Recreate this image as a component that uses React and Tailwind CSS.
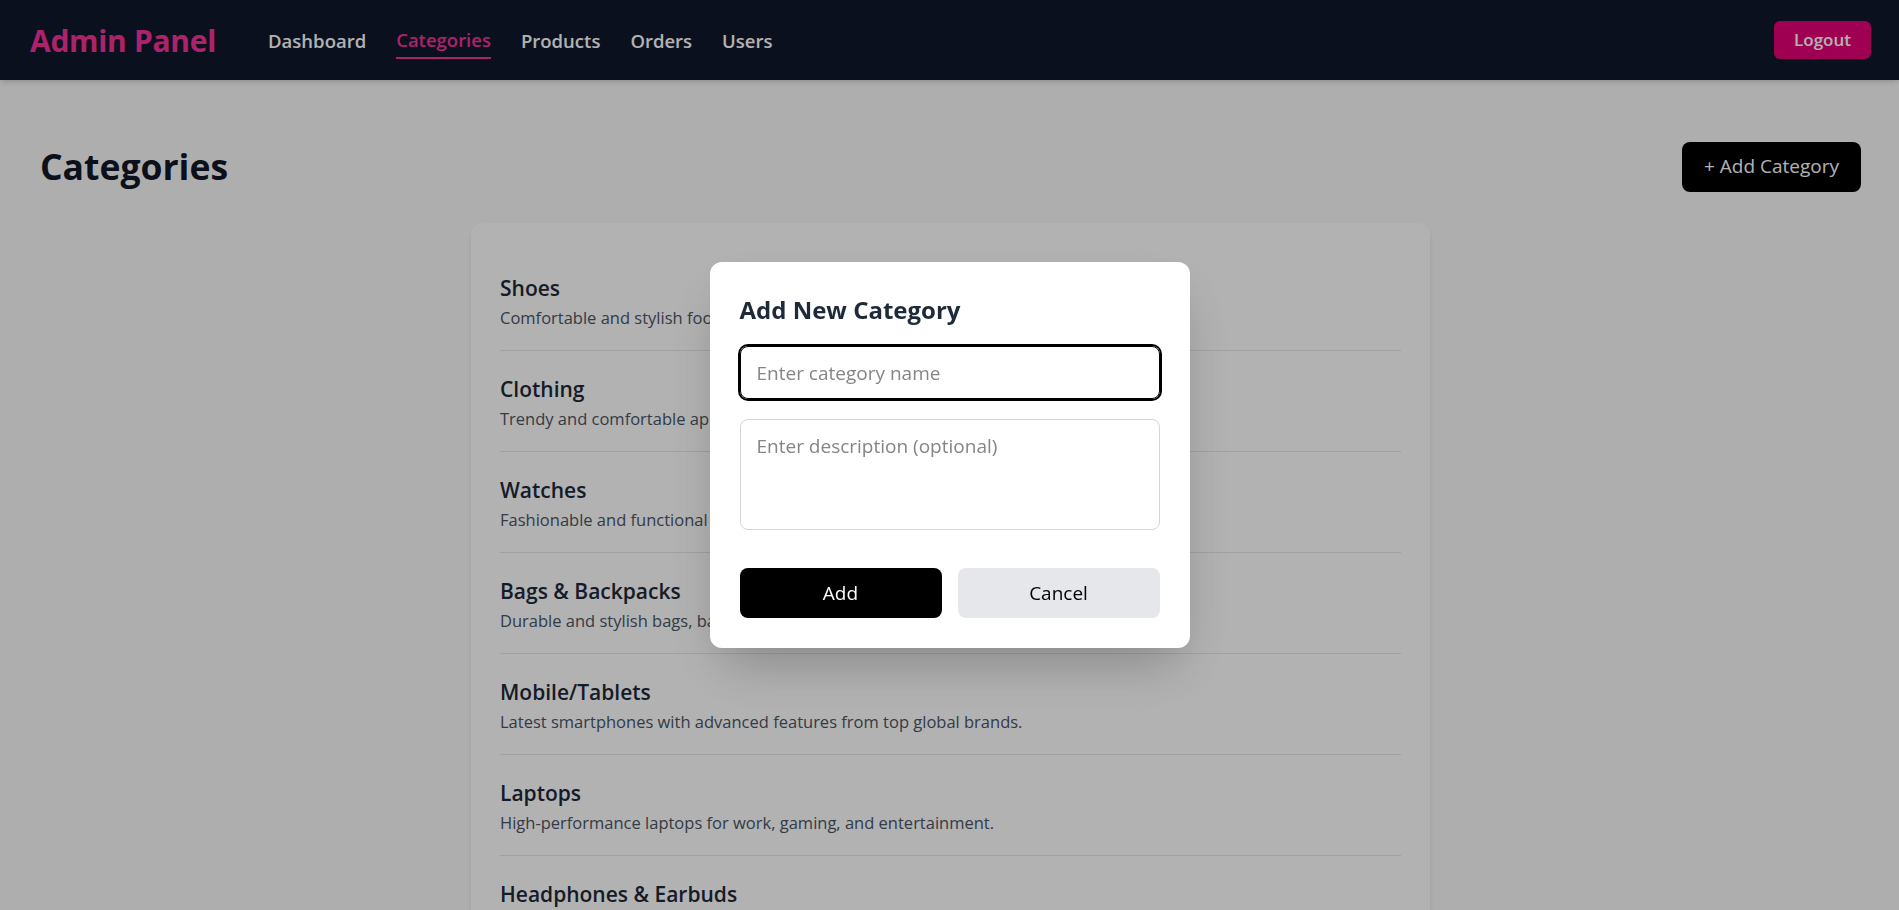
import React, { useState } from "react";

const categories = [
  { name: "Shoes", description: "Comfortable and stylish footwear for every occasion and season." },
  { name: "Clothing", description: "Trendy and comfortable apparel for men, women, and kids." },
  { name: "Watches", description: "Fashionable and functional watches from leading brands." },
  { name: "Bags & Backpacks", description: "Durable and stylish bags, backpacks, and travel essentials." },
  { name: "Mobile/Tablets", description: "Latest smartphones with advanced features from top global brands." },
  { name: "Laptops", description: "High-performance laptops for work, gaming, and entertainment." },
  { name: "Headphones & Earbuds", description: "Immersive sound with wired and wireless audio gear." },
  { name: "Home Appliances", description: "Smart and efficient appliances for modern living." },
];

const navLinks = ["Dashboard", "Categories", "Products", "Orders", "Users"];

const App = () => {
  const [name, setName] = useState("");
  const [description, setDescription] = useState("");

  return (
    <div className="h-screen overflow-hidden bg-gray-50 font-['Open_Sans',sans-serif]">
      {/* Top navigation */}
      <nav className="h-20 bg-slate-900 shadow-md flex items-center justify-between pl-[30px] pr-[28px]">
        <div className="flex items-center">
          <span className="text-[30px] font-bold text-pink-500 tracking-[-0.3px]">Admin Panel</span>
          <div className="flex items-center gap-[30px] ml-[52px]">
            {navLinks.map((link) => (
              <a
                key={link}
                href="#"
                className={
                  link === "Categories"
                    ? "text-[18.5px] leading-7 font-semibold text-pink-500 border-b-2 border-pink-500 pt-[5px] pb-[3px]"
                    : "text-[18.5px] leading-7 font-semibold text-white pt-[2px]"
                }
              >
                {link}
              </a>
            ))}
          </div>
        </div>
        <button className="h-[38px] px-5 rounded-md bg-pink-600 text-white text-[17px] font-semibold">
          Logout
        </button>
      </nav>

      {/* Page content */}
      <main className="pl-10 pr-[38px] pt-[60px]">
        <div className="flex items-center justify-between mb-[30px]">
          <h1 className="text-[35.5px] font-bold text-gray-900">Categories</h1>
          <button className="h-[50px] px-[22px] rounded-lg bg-black text-white text-[19px]">
            + Add Category
          </button>
        </div>

        <div className="max-w-[959px] mx-auto bg-white rounded-xl shadow-md px-[29px] pt-[27px]">
          {categories.map((cat) => (
            <div key={cat.name} className="border-b border-gray-200 pt-6 pb-5">
              <h3 className="text-[21px] leading-7 font-semibold text-gray-800">{cat.name}</h3>
              <p className="text-[16.5px] leading-6 text-gray-600 mt-1">{cat.description}</p>
            </div>
          ))}
        </div>
      </main>

      {/* Modal */}
      <div className="fixed inset-0 bg-black/30 flex items-center justify-center">
        <div className="w-[480px] bg-white rounded-xl shadow-2xl px-[30px] pt-[32px] pb-[30px]">
          <h2 className="text-[24px] font-bold text-gray-800 mb-5 leading-8">Add New Category</h2>
          <input
            autoFocus
            type="text"
            value={name}
            onChange={(e) => setName(e.target.value)}
            placeholder="Enter category name"
            className="block w-full h-[53px] px-4 text-[19px] rounded-lg border border-black ring-2 ring-black outline-none placeholder:text-[#858585]"
          />
          <textarea
            value={description}
            onChange={(e) => setDescription(e.target.value)}
            placeholder="Enter description (optional)"
            className="block w-full h-[111px] mt-5 px-4 py-3 text-[19px] leading-7 rounded-lg border border-gray-300 resize-none outline-none placeholder:text-[#858585]"
          />
          <div className="flex gap-4 mt-[38px]">
            <button className="flex-1 h-[50px] rounded-lg bg-black text-white text-[19px]">Add</button>
            <button className="flex-1 h-[50px] rounded-lg bg-gray-200 text-black text-[19px]">Cancel</button>
          </div>
        </div>
      </div>
    </div>
  );
};

export default App;
